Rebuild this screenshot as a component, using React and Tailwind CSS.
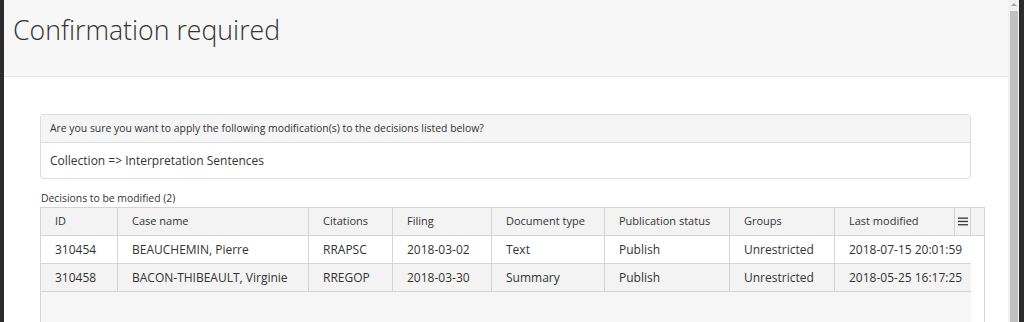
export default function App() {
  const cols = [78, 191, 84, 99, 113, 125, 105, 136];
  const headers = ["ID", "Case name", "Citations", "Filing", "Document type", "Publication status", "Groups", "Last modified"];
  const rows = [
    ["310454", "BEAUCHEMIN, Pierre", "RRAPSC", "2018-03-02", "Text", "Publish", "Unrestricted", "2018-07-15 20:01:59"],
    ["310458", "BACON-THIBEAULT, Virginie", "RREGOP", "2018-03-30", "Summary", "Publish", "Unrestricted", "2018-05-25 16:17:25"],
  ];
  const font = { fontFamily: '"Open Sans", "Liberation Sans", sans-serif' };
  return (
    <div className="flex h-[322px] w-[1024px] overflow-hidden bg-[#2b2b2b] text-[#333]" style={font}>
      <div className="w-[4px] shrink-0 bg-[#2b2b2b]" />
      <div className="flex w-[1004px] shrink-0 flex-col bg-white">
        <div className="h-[77px] shrink-0 border-b border-[#e5e5e5] bg-[#f7f7f7] pl-[9px] pt-[11px]">
          <h1 className="text-[26.7px] font-light leading-[38px] text-[#333]">Confirmation required</h1>
        </div>
        <div className="pl-[36px] pt-[37px]">
          <div className="w-[931px] rounded-[3px] border border-[#ddd]">
            <div className="h-[28px] border-b border-[#ddd] bg-[#f5f5f5] pl-[9px] text-[10.4px] leading-[27px]">
              Are you sure you want to apply the following modification(s) to the decisions listed below?
            </div>
            <div className="h-[35px] pl-[9px] text-[12px] leading-[35px]">Collection =&gt; Interpretation Sentences</div>
          </div>
          <div className="mt-[11px] pl-[1px] text-[10.4px] leading-[16px]">Decisions to be modified (2)</div>
          <div className="mt-[1px] w-[945px] border border-[#d4d4d4]">
            <div className="flex h-[28px] border-b border-[#d4d4d4] bg-[#f3f3f3]">
              {headers.map((h, i) => (
                <div
                  key={h}
                  className="flex shrink-0 items-center border-r border-[#d4d4d4] pl-[14px] text-[11px]"
                  style={{ width: i === 0 ? cols[i] - 1 : cols[i] }}
                >
                  {i === 7 ? (
                    <div className="flex h-full w-full items-center justify-between">
                      <span>{h}</span>
                      <div className="flex h-full w-[16px] items-center justify-center border-l border-[#d4d4d4]">
                        <svg width="10" height="9" viewBox="0 0 10 9">
                          <rect x="0" y="0.5" width="10" height="1.3" fill="#333" />
                          <rect x="0" y="3.8" width="10" height="1.3" fill="#333" />
                          <rect x="0" y="7.1" width="10" height="1.3" fill="#333" />
                        </svg>
                      </div>
                    </div>
                  ) : (
                    h
                  )}
                </div>
              ))}
              <div className="flex-1" />
            </div>
            {rows.map((r, ri) => (
              <div key={ri} className={`flex h-[28px] w-[930px] border-b border-[#d4d4d4] ${ri === 1 ? "bg-[#f3f3f3]" : "bg-white"}`}>
                {r.map((c, i) => (
                  <div
                    key={i}
                    className={`flex shrink-0 items-center pl-[14px] text-[12px] ${i < 7 ? "border-r border-[#d4d4d4]" : ""}`}
                    style={{ width: i === 0 ? cols[i] - 1 : cols[i] }}
                  >
                    {c}
                  </div>
                ))}
              </div>
            ))}
            <div className="flex h-[40px]">
              <div className="w-[930px] bg-[#f6f6f6]" />
              <div className="flex-1 bg-white" />
            </div>
          </div>
        </div>
      </div>
      <div className="relative w-[11px] shrink-0 bg-[#f1f1f1]">
        <div className="absolute left-[3px] top-[3px] h-0 w-0 border-x-[3px] border-b-[3px] border-x-transparent border-b-[#a3a3a3]" />
        <div className="absolute left-[2px] top-[11px] h-[320px] w-[8px] bg-[#c1c1c1]" />
      </div>
      <div className="w-[5px] shrink-0 bg-[#2b2b2b]" />
    </div>
  );
}
